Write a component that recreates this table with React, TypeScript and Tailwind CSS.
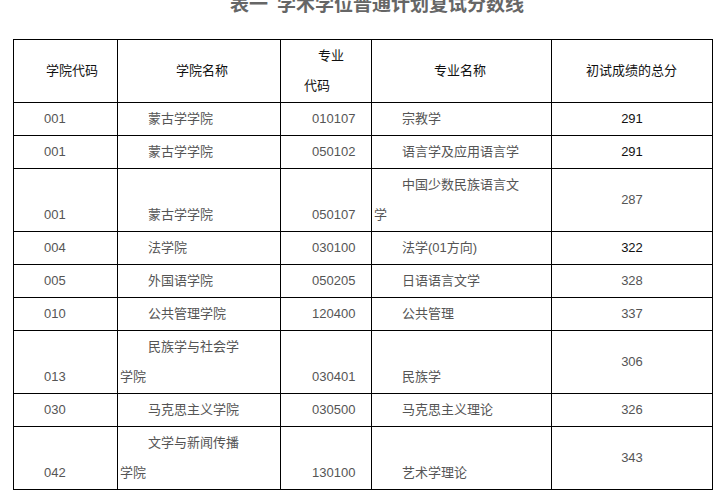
const rows: { code: string; college: string[]; major: string; name: string[]; score: string; tall?: boolean; dark?: boolean }[] = [
  { code: '001', college: ['蒙古学学院'], major: '010107', name: ['宗教学'], score: '291', dark: true },
  { code: '001', college: ['蒙古学学院'], major: '050102', name: ['语言学及应用语言学'], score: '291', dark: true },
  { code: '001', college: ['蒙古学学院'], major: '050107', name: ['中国少数民族语言文', '学'], score: '287', tall: true },
  { code: '004', college: ['法学院'], major: '030100', name: ['法学(01方向)'], score: '322', dark: true },
  { code: '005', college: ['外国语学院'], major: '050205', name: ['日语语言文学'], score: '328' },
  { code: '010', college: ['公共管理学院'], major: '120400', name: ['公共管理'], score: '337' },
  { code: '013', college: ['民族学与社会学', '学院'], major: '030401', name: ['民族学'], score: '306', tall: true },
  { code: '030', college: ['马克思主义学院'], major: '030500', name: ['马克思主义理论'], score: '326' },
  { code: '042', college: ['文学与新闻传播', '学院'], major: '130100', name: ['艺术学理论'], score: '343', tall: true },
];

function Lines({ lines, indent }: { lines: string[]; indent: string }) {
  if (lines.length === 1) return <div className={indent}>{lines[0]}</div>;
  return (
    <>
      <div className={indent}>{lines[0]}</div>
      <div>{lines[1]}</div>
    </>
  );
}

export default function App() {
  const td = 'border border-black px-[2px] pb-[1px] pt-0 align-bottom leading-[30px]';
  return (
    <div
      className="min-h-screen bg-white text-[13px] text-[#555]"
      style={{ fontFamily: '"Liberation Sans", "Noto Sans CJK SC", sans-serif' }}
    >
      <div className="pl-[230px] -mt-[5px] mb-[25px] h-[19px] text-[19px] leading-[19px] font-bold text-[#666] whitespace-nowrap">
        表一<span className="ml-[9px]">学术学位普通计划复试分数线</span>
      </div>
      <div className="pl-[13px]">
        <table className="table-fixed border-collapse border border-black w-[699px]">
          <colgroup>
            <col className="w-[104px]" />
            <col className="w-[163px]" />
            <col className="w-[91px]" />
            <col className="w-[180px]" />
            <col className="w-[161px]" />
          </colgroup>
          <thead>
            <tr className="h-[63px] text-[#111] leading-[30px]">
              <th className="border border-black font-normal text-left pl-[32px] align-middle">学院代码</th>
              <th className="border border-black font-normal text-left pl-[58px] align-middle">学院名称</th>
              <th className="border border-black font-normal text-left align-middle">
                <div className="pl-[37px]">专业</div>
                <div className="pl-[23px]">代码</div>
              </th>
              <th className="border border-black font-normal text-left pl-[62px] align-middle">专业名称</th>
              <th className="border border-black font-normal text-left pl-[34px] align-middle">初试成绩的总分</th>
            </tr>
          </thead>
          <tbody>
            {rows.map((r, i) => (
              <tr key={i} className={r.tall ? 'h-[63px]' : 'h-[33px]'}>
                <td className={td}>
                  <div className="pl-[28px]">{r.code}</div>
                </td>
                <td className={td}>
                  <Lines lines={r.college} indent="pl-[28px]" />
                </td>
                <td className={td}>
                  <div className="pl-[29px]">{r.major}</div>
                </td>
                <td className={td}>
                  <Lines lines={r.name} indent="pl-[28px]" />
                </td>
                <td className={`border border-black text-center align-middle leading-[30px] ${r.dark ? 'text-[#111]' : ''}`}>
                  {r.score}
                </td>
              </tr>
            ))}
          </tbody>
        </table>
      </div>
    </div>
  );
}
